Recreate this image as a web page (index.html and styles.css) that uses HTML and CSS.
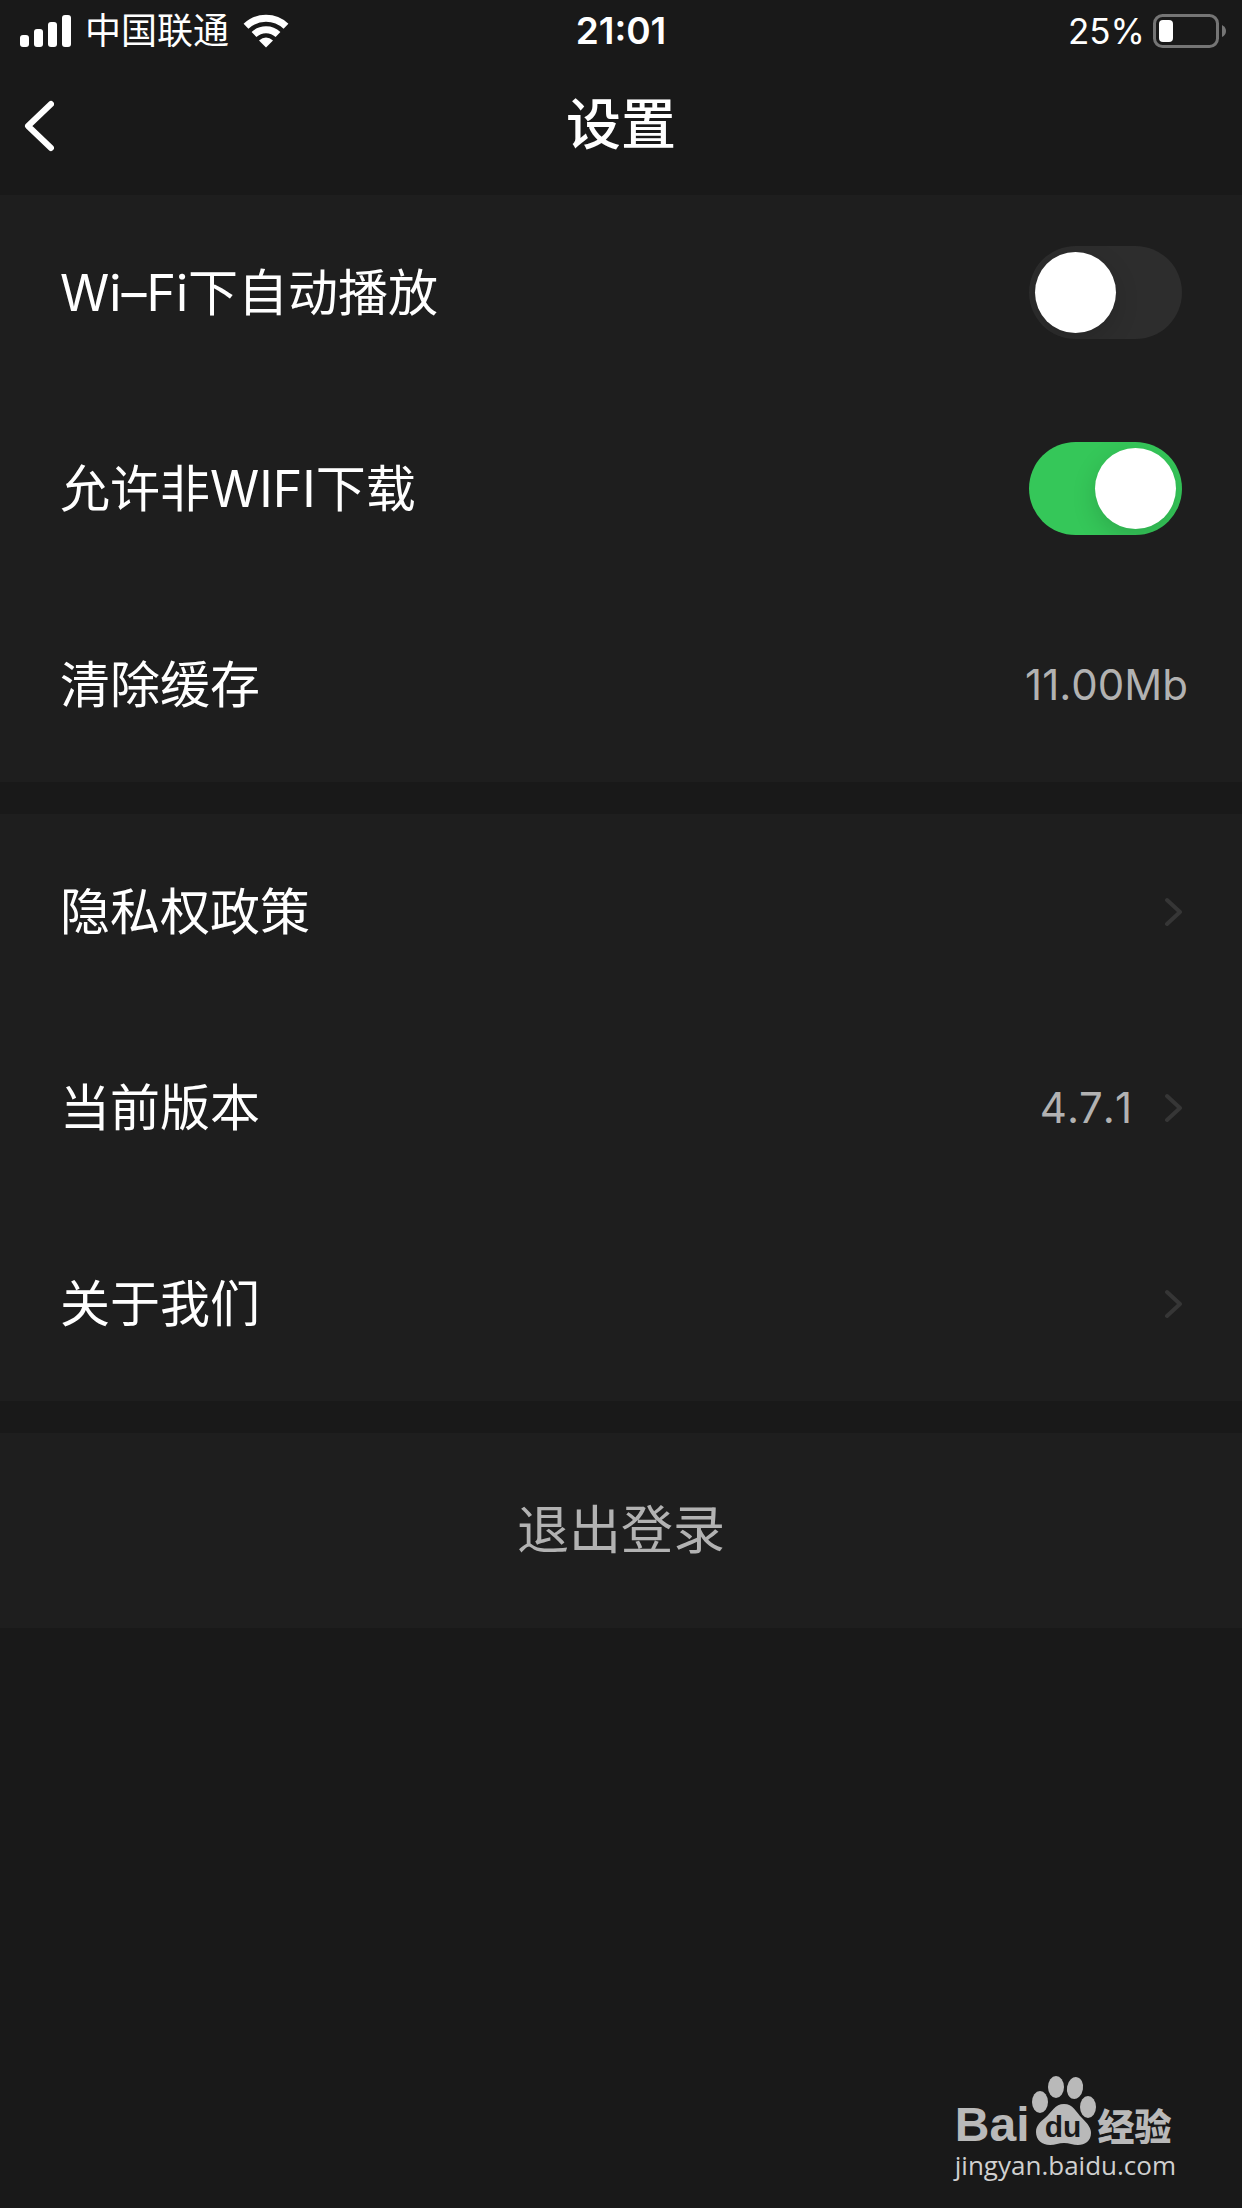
FILE: index.html
```html
<!DOCTYPE html>
<html lang="zh-CN">
<head>
<meta charset="utf-8">
<meta name="viewport" content="width=device-width, initial-scale=1">
<title>设置</title>
<link rel="stylesheet" href="styles.css">
</head>
<body>
<div class="page">
  <header class="header">
    <div class="status">
      <div class="status-left">
        <svg class="signal" viewBox="0 0 51 32" width="51" height="32" aria-hidden="true">
          <rect x="0" y="20" width="9" height="12" rx="3"/>
          <rect x="14" y="14" width="9" height="18" rx="3"/>
          <rect x="28" y="7" width="9" height="25" rx="3"/>
          <rect x="42" y="0" width="9" height="32" rx="3"/>
        </svg>
        <span class="carrier">中国联通</span>
        <svg class="wifi" viewBox="0 0 46 34" width="46" height="34" aria-hidden="true">
          <path class="wifi-arc" d="M3 12.200A29 29 0 0 1 43 12.200"/>
          <path class="wifi-arc" d="M11 20.500A17.500 17.500 0 0 1 35 20.500"/>
          <path d="M23 33.500L16 26.500Q23 20.500 30 26.500Z"/>
        </svg>
      </div>
      <time class="clock">21:01</time>
      <div class="status-right">
        <span class="percent">25%</span>
        <svg class="battery" viewBox="0 0 74 34" width="74" height="34" aria-hidden="true">
          <rect class="battery-shell" x="1.500" y="1.500" width="63" height="31" rx="8"/>
          <rect x="6" y="6" width="14" height="22" rx="4"/>
          <path class="battery-cap" d="M69 11Q73 13 73 17T69 23Z"/>
        </svg>
      </div>
    </div>
    <nav class="nav">
      <button class="back" type="button" aria-label="返回">
        <svg viewBox="0 0 30 52" width="30" height="52" aria-hidden="true"><path d="M27 4L4 26L27 48"/></svg>
      </button>
      <h1 class="title">设置</h1>
    </nav>
  </header>

  <main class="groups">
    <section class="group">
      <label class="row">
        <span>Wi–Fi下自动播放</span>
        <input class="switch" type="checkbox" role="switch">
      </label>
      <label class="row">
        <span>允许非WIFI下载</span>
        <input class="switch" type="checkbox" role="switch" checked>
      </label>
      <button class="row" type="button">
        <span>清除缓存</span>
        <span class="value value-end">11.00Mb</span>
      </button>
    </section>

    <section class="group">
      <a class="row" href="#privacy">
        <span>隐私权政策</span>
        <svg class="chevron" viewBox="0 0 18 30" width="18" height="30" aria-hidden="true"><path d="M3 3L16 15L3 27"/></svg>
      </a>
      <a class="row" href="#version">
        <span>当前版本</span>
        <span class="detail">
          <span class="value">4.7.1</span>
          <svg class="chevron" viewBox="0 0 18 30" width="18" height="30" aria-hidden="true"><path d="M3 3L16 15L3 27"/></svg>
        </span>
      </a>
      <a class="row" href="#about">
        <span>关于我们</span>
        <svg class="chevron" viewBox="0 0 18 30" width="18" height="30" aria-hidden="true"><path d="M3 3L16 15L3 27"/></svg>
      </a>
    </section>

    <section class="group">
      <button class="row logout" type="button">退出登录</button>
    </section>
  </main>

  <div class="watermark">
    <div class="brand">
      <span class="brand-bai">Bai</span>
      <svg class="paw" viewBox="0 0 66 72" width="66" height="72" role="img" aria-label="du">
        <ellipse cx="9" cy="28" rx="8" ry="11"/>
        <ellipse cx="25" cy="13" rx="8" ry="11"/>
        <ellipse cx="44" cy="14" rx="8" ry="11" transform="rotate(10 44 14)"/>
        <ellipse cx="57" cy="33" rx="8" ry="11"/>
        <path d="M33 30C42 30 45 38 51 44C57 50 60 54 60 59C60 67 54 71 47 71C42 71 38 69 33 69C28 69 24 71 19 71C11 71 5 66 5 58C5 52 9 48 14 44C21 38 24 30 33 30Z"/>
        <text class="paw-text" x="32" y="63" text-anchor="middle">du</text>
      </svg>
      <span class="brand-jy">经验</span>
    </div>
    <div class="site">jingyan.baidu.com</div>
  </div>
</div>
</body>
</html>
```
FILE: styles.css
```css
* {
  box-sizing: border-box;
}

body {
  margin: 0;
  background: #191919;
  color: #fff;
  font-family: Inter, "Noto Sans CJK SC", sans-serif;
}

.page {
  position: relative;
  min-height: 100vh;
}

.header {
  padding-bottom: 5px;
}

.status {
  display: grid;
  grid-template-columns: 1fr auto 1fr;
  align-items: center;
  height: 62px;
  padding: 0 15px;
  font-size: 36px;
  line-height: 40px;
}

.status svg {
  fill: #fff;
}

.status-left,
.status-right {
  display: flex;
  align-items: center;
}

.status-left {
  gap: 14px;
  padding-left: 5px;
}

.status-right {
  justify-content: flex-end;
  gap: 8px;
}

.percent {
  font-size: 35px;
}

.status .wifi-arc {
  fill: none;
  stroke: #fff;
  stroke-width: 7;
}

.status .battery-shell {
  fill: none;
  stroke: #757575;
  stroke-width: 3;
}

.status .battery-cap {
  fill: #757575;
}

.clock {
  font-size: 37px;
  font-weight: 600;
}

.nav {
  display: grid;
  grid-template-columns: 1fr auto 1fr;
  align-items: center;
  height: 128px;
  padding: 0 24px;
}

.back {
  justify-self: start;
  display: flex;
  padding: 0;
  border: 0;
  background: none;
}

.back path,
.chevron path {
  fill: none;
  stroke: #fff;
  stroke-width: 6;
  stroke-linecap: round;
  stroke-linejoin: round;
}

.title {
  margin: 0;
  padding-bottom: 4px;
  font-size: 55px;
  line-height: 64px;
  font-weight: 500;
}

.groups {
  display: grid;
  gap: 32px;
}

.group {
  display: grid;
  gap: 1px;
  background: #1e1e1e;
}

.row {
  display: flex;
  align-items: center;
  justify-content: space-between;
  width: 100%;
  min-height: 195px;
  padding: 0 60px;
  border: 0;
  background: none;
  color: #fff;
  font-family: inherit;
  font-size: 50px;
  line-height: 60px;
  text-align: left;
  text-decoration: none;
}

.switch {
  appearance: none;
  display: flex;
  flex: none;
  width: 153px;
  height: 93px;
  margin: 0;
  padding: 6px;
  border-radius: 47px;
  background: #2d2d2d;
  overflow: hidden;
}

.switch::before {
  content: "";
  width: 81px;
  height: 81px;
  border-radius: 50%;
  background: #fff;
  box-shadow: 0 8px 24px rgba(0, 0, 0, 0.15);
}

.switch:checked {
  justify-content: flex-end;
  background: #35c759;
}

.value {
  color: #b2b2b2;
  font-size: 42px;
  font-kerning: none;
}

.value-end {
  margin-right: -6px;
}

.detail {
  display: flex;
  align-items: center;
  gap: 32px;
}

.chevron path {
  stroke: #363636;
  stroke-width: 4;
}

.logout {
  justify-content: center;
  color: #b2b2b2;
  font-size: 52px;
}

.watermark {
  position: absolute;
  right: 66px;
  bottom: 24px;
  color: #b9b9b9;
}

.brand {
  display: flex;
  align-items: flex-end;
  gap: 1px;
}

.brand-bai {
  font-family: "Liberation Sans", sans-serif;
  font-size: 48px;
  line-height: 42px;
  font-weight: 700;
}

.paw {
  fill: #b9b9b9;
}

.paw-text {
  fill: #191919;
  font-family: "Liberation Sans", sans-serif;
  font-size: 30px;
  font-weight: 700;
}

.brand-jy {
  font-size: 37px;
  line-height: 36px;
  font-weight: 900;
}

.site {
  color: #d0d0d0;
  font-family: "Open Sans", sans-serif;
  font-size: 26px;
  line-height: 38px;
  text-align: center;
}
```
